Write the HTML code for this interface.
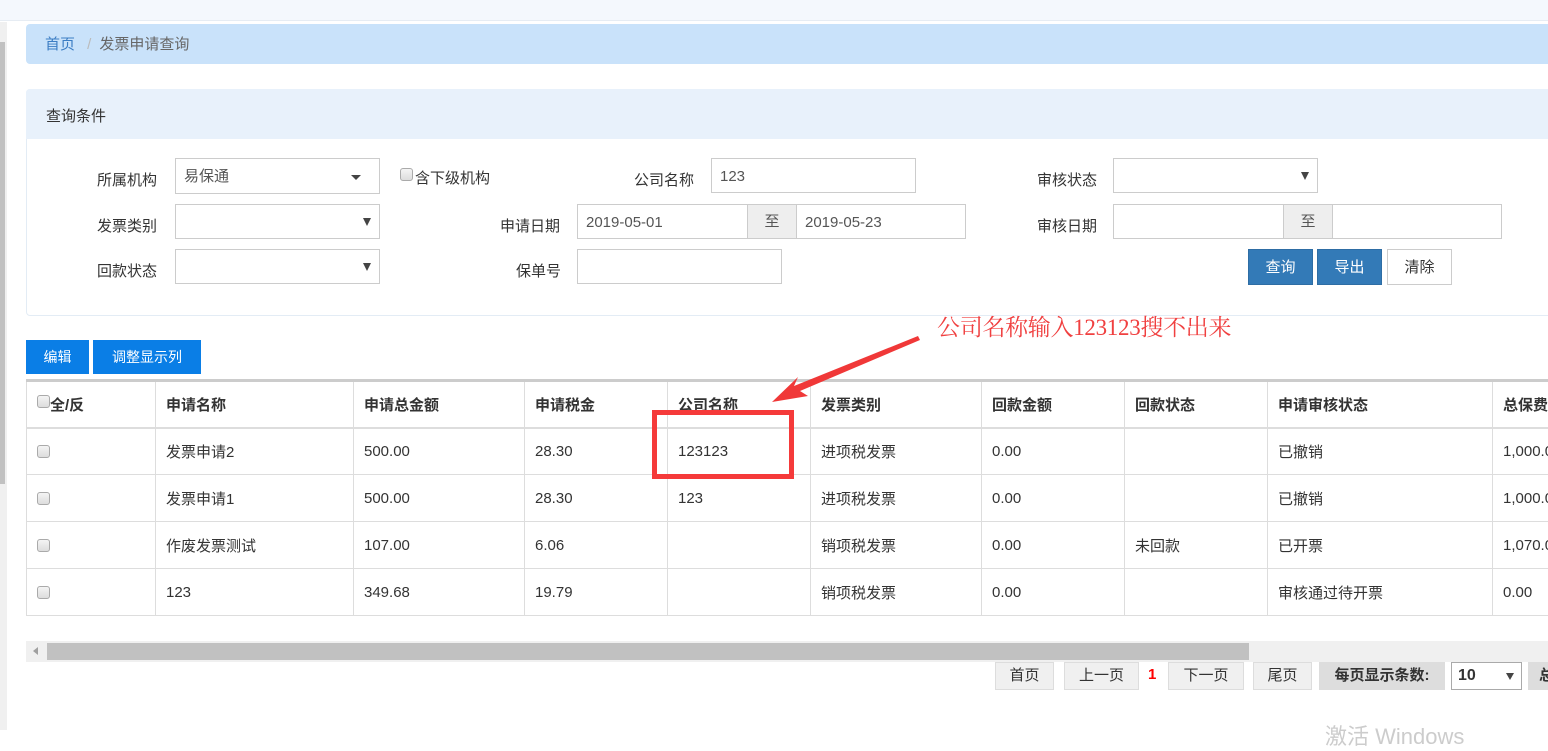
<!DOCTYPE html>
<html><head><meta charset="utf-8"><style>
*{margin:0;padding:0;box-sizing:border-box}
body{width:1548px;height:730px;overflow:hidden;background:#fff;position:relative;font-family:"Liberation Sans","Noto Sans CJK SC",sans-serif;font-size:15px;color:#333}
.a{position:absolute}
.lbl{position:absolute;font-size:15px;color:#333;text-align:right}
.inp{position:absolute;border:1px solid #ccc;background:#fff;height:36px;font-size:15px;color:#555;padding:0 8px;line-height:36px}
.add{position:absolute;border:1px solid #ccc;background:#eee;height:36px;text-align:center;line-height:34px;color:#555}
.tri{position:absolute;right:8px;top:13px;width:0;height:0;border-left:4px solid transparent;border-right:4px solid transparent;border-top:8px solid #444}
.cb{position:absolute;width:13px;height:13px;border:1px solid #aaa;border-radius:3px;background:linear-gradient(#f4f4f4,#ddd)}
table{position:absolute;left:26px;top:379px;border-collapse:collapse;border-top:3px solid #ccc;table-layout:fixed;width:1560px}
td,th{border:1px solid #ddd;height:47px;padding:0 10px;text-align:left;font-size:15px;white-space:nowrap;overflow:hidden}
th{font-weight:bold;color:#333;border-bottom:2px solid #ddd}
.pb{position:absolute;top:662px;height:28px;border:1px solid #ddd;background:#f0f0f0;text-align:center;line-height:26px;font-size:15px;color:#333}
</style></head><body>
<div class="a" style="left:0;top:0;width:1548px;height:21px;background:#f4f8fd;border-bottom:1px solid #e6ecf3"></div>
<div class="a" style="left:0;top:22px;width:7px;height:708px;background:#f0f0f0"></div>
<div class="a" style="left:0;top:42px;width:5px;height:442px;background:#c1c1c1"></div>
<div class="a" style="left:26px;top:24px;width:1530px;height:40px;background:#c9e2fa;border-radius:4px"></div>
<div class="a" style="left:45px;top:33px;font-size:15px;color:#3b7dc4">首页 <span style="color:#bbb;margin:0 8px">/</span><span style="color:#666">发票申请查询</span></div>

<div class="a" style="left:26px;top:89px;width:1530px;height:227px;border:1px solid #e3ecf5;border-radius:4px;background:#fff"></div>
<div class="a" style="left:26px;top:89px;width:1530px;height:50px;background:#e8f1fb;border-radius:4px 4px 0 0"></div>
<div class="a" style="left:46px;top:105px;font-size:15px">查询条件</div>

<div class="lbl" style="left:97px;top:169px">所属机构</div>
<div class="inp" style="left:175px;top:158px;width:205px">易保通<div class="tri" style="border-top-width:5px;border-left-width:5px;border-right-width:5px;top:16px;right:18px"></div></div>
<div class="cb" style="left:400px;top:168px"></div>
<div class="a" style="left:415px;top:167px">含下级机构</div>
<div class="lbl" style="left:634px;top:169px">公司名称</div>
<div class="inp" style="left:711px;top:158px;width:205px;height:35px">123</div>
<div class="lbl" style="left:1037px;top:169px">审核状态</div>
<div class="inp" style="left:1113px;top:158px;width:205px;height:35px"><div class="tri"></div></div>

<div class="lbl" style="left:97px;top:215px">发票类别</div>
<div class="inp" style="left:175px;top:204px;width:205px;height:35px"><div class="tri"></div></div>
<div class="lbl" style="left:500px;top:215px">申请日期</div>
<div class="inp" style="left:577px;top:204px;width:171px;height:35px">2019-05-01</div>
<div class="add" style="left:747px;top:204px;width:50px;height:35px">至</div>
<div class="inp" style="left:796px;top:204px;width:170px;height:35px">2019-05-23</div>
<div class="lbl" style="left:1037px;top:215px">审核日期</div>
<div class="inp" style="left:1113px;top:204px;width:171px;height:35px"></div>
<div class="add" style="left:1283px;top:204px;width:50px;height:35px">至</div>
<div class="inp" style="left:1332px;top:204px;width:170px;height:35px"></div>

<div class="lbl" style="left:97px;top:260px">回款状态</div>
<div class="inp" style="left:175px;top:249px;width:205px;height:35px"><div class="tri"></div></div>
<div class="lbl" style="left:516px;top:260px">保单号</div>
<div class="inp" style="left:577px;top:249px;width:205px;height:35px"></div>
<div class="a" style="left:1248px;top:249px;width:65px;height:36px;background:#337ab7;border:1px solid #2e6da4;color:#fff;text-align:center;line-height:36px">查询</div>
<div class="a" style="left:1317px;top:249px;width:65px;height:36px;background:#337ab7;border:1px solid #2e6da4;color:#fff;text-align:center;line-height:36px">导出</div>
<div class="a" style="left:1387px;top:249px;width:65px;height:36px;background:#fff;border:1px solid #ccc;color:#333;text-align:center;line-height:36px">清除</div>

<div class="a" style="left:937px;top:309px;font-family:'Liberation Serif','Noto Serif CJK SC',serif;font-size:23px;color:#f04040;letter-spacing:-0.3px">公司名称输入123123搜不出来</div>

<div class="a" style="left:26px;top:340px;width:63px;height:34px;background:#0a7ee6;color:#fff;text-align:center;line-height:34px;font-size:14px">编辑</div>
<div class="a" style="left:93px;top:340px;width:108px;height:34px;background:#0a7ee6;color:#fff;text-align:center;line-height:34px;font-size:14px">调整显示列</div>

<table>
<colgroup><col style="width:129px"><col style="width:198px"><col style="width:171px"><col style="width:143px"><col style="width:143px"><col style="width:171px"><col style="width:143px"><col style="width:143px"><col style="width:225px"><col style="width:94px"></colgroup>
<tr><th><span class="cb" style="position:relative;display:inline-block;top:-2px;margin-left:0"></span>全/反</th><th>申请名称</th><th>申请总金额</th><th>申请税金</th><th>公司名称</th><th>发票类别</th><th>回款金额</th><th>回款状态</th><th>申请审核状态</th><th>总保费</th></tr>
<tr><td><span class="cb" style="position:relative;display:inline-block;top:2px"></span></td><td>发票申请2</td><td>500.00</td><td>28.30</td><td>123123</td><td>进项税发票</td><td>0.00</td><td></td><td>已撤销</td><td>1,000.00</td></tr>
<tr><td><span class="cb" style="position:relative;display:inline-block;top:2px"></span></td><td>发票申请1</td><td>500.00</td><td>28.30</td><td>123</td><td>进项税发票</td><td>0.00</td><td></td><td>已撤销</td><td>1,000.00</td></tr>
<tr><td><span class="cb" style="position:relative;display:inline-block;top:2px"></span></td><td>作废发票测试</td><td>107.00</td><td>6.06</td><td></td><td>销项税发票</td><td>0.00</td><td>未回款</td><td>已开票</td><td>1,070.00</td></tr>
<tr><td><span class="cb" style="position:relative;display:inline-block;top:2px"></span></td><td>123</td><td>349.68</td><td>19.79</td><td></td><td>销项税发票</td><td>0.00</td><td></td><td>审核通过待开票</td><td>0.00</td></tr>
</table>

<div class="a" style="left:652px;top:410px;width:142px;height:69px;border:5px solid #f53a3a"></div>
<svg class="a" style="left:760px;top:330px" width="170" height="80"><polygon points="158,6 34,56 38,47 12,72 48,66 40,61 160,10" fill="#f03838"/></svg>

<div class="a" style="left:26px;top:641px;width:1530px;height:21px;background:#f0f0f0"></div>
<div class="a" style="left:47px;top:643px;width:1202px;height:17px;background:#c1c1c1"></div>
<div class="a" style="left:33px;top:647px;width:0;height:0;border-top:4px solid transparent;border-bottom:4px solid transparent;border-right:5px solid #a0a0a0"></div>

<div class="pb" style="left:995px;width:59px">首页</div>
<div class="pb" style="left:1064px;width:75px">上一页</div>
<div class="a" style="left:1148px;top:666px;color:#f00;font-weight:bold">1</div>
<div class="pb" style="left:1168px;width:76px">下一页</div>
<div class="pb" style="left:1253px;width:59px">尾页</div>
<div class="pb" style="left:1319px;width:126px;background:#ddd;border-color:#ddd;font-weight:bold">每页显示条数:</div>
<div class="a" style="left:1451px;top:662px;width:71px;height:28px;border:1px solid #aaa;background:#fff;font-weight:bold;font-size:16px;line-height:26px;padding-left:6px">10<div class="tri" style="top:10px;right:7px;border-top-width:7px"></div></div>
<div class="pb" style="left:1528px;width:40px;background:#ddd;border-color:#ddd;font-weight:bold;text-align:left;padding-left:10px">总</div>
<div class="a" style="left:1325px;top:719px;font-size:22px;color:#ccc">激活 Windows</div>
</body></html>
